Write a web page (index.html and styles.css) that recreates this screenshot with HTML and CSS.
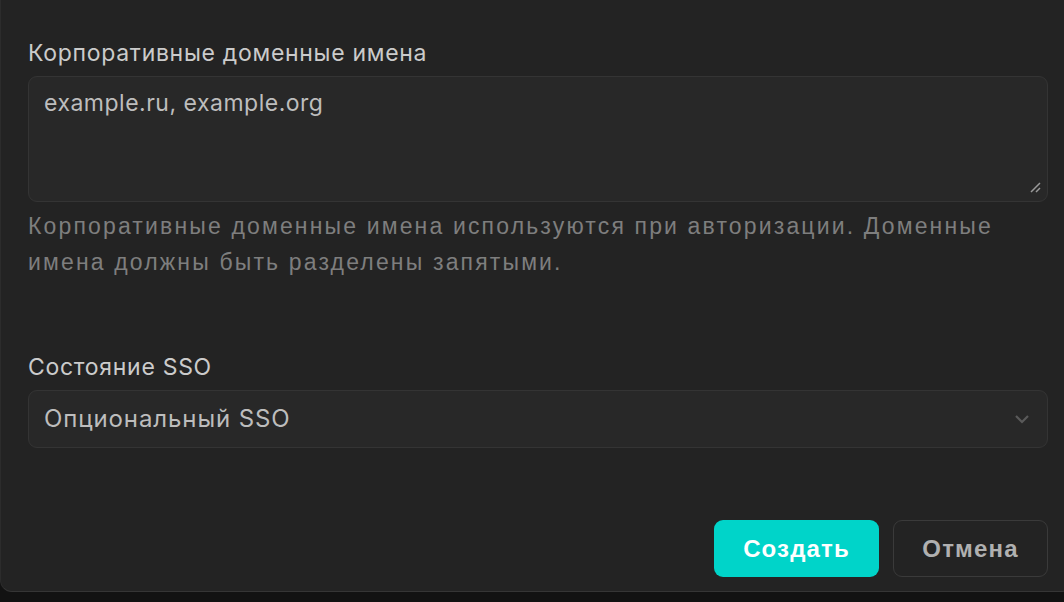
FILE: index.html
```html
<!DOCTYPE html>
<html lang="ru">
<head>
<meta charset="utf-8">
<link rel="stylesheet" href="styles.css">
</head>
<body>
<div class="modal">
  <div class="field">
    <label class="label">Корпоративные доменные имена</label>
    <div class="textarea">
      <span class="value">example.ru, example.org</span>
      <svg class="grip" width="12" height="12" viewBox="0 0 12 12"><path d="M2 11 L11 2 M7 11 L11 7" stroke="#9a9a9a" stroke-width="1.5" fill="none"/></svg>
    </div>
    <p class="help">Корпоративные доменные имена используются при авторизации. Доменные имена должны быть разделены запятыми.</p>
  </div>
  <div class="field sso">
    <label class="label">Состояние SSO</label>
    <div class="select">
      <span class="value select-value">Опциональный SSO</span>
      <svg class="chev" width="16" height="10" viewBox="0 0 16 10"><path d="M2 2 L8 8 L14 2" stroke="#5a5a5a" stroke-width="2.2" fill="none"/></svg>
    </div>
  </div>
  <div class="actions">
    <button class="btn primary">Создать</button>
    <button class="btn secondary">Отмена</button>
  </div>
</div>
</body>
</html>
```
FILE: styles.css
```css
html, body { margin: 0; padding: 0; }
body {
  background: #121212;
  width: 1064px;
  height: 602px;
  overflow: hidden;
  font-family: Inter, "Liberation Sans", sans-serif;
}
.modal {
  box-sizing: border-box;
  width: 1074px;
  height: 592px;
  background: #232323;
  border-bottom: 1px solid #353535;
  border-left: 1px solid #2c2c2c;
  border-radius: 0 0 12px 12px;
  padding: 38px 17px 0 27px;
  display: flex;
  flex-direction: column;
}
.field { display: flex; flex-direction: column; }
.label {
  font-size: 23px;
  letter-spacing: 0.7px;
  color: #cbcbcb;
  line-height: 30px;
  margin-bottom: 8px;
}
.textarea {
  box-sizing: border-box;
  position: relative;
  width: 1020px;
  height: 126px;
  background: #282828;
  border: 1px solid #343434;
  border-radius: 9px;
  padding: 11px 15px;
}
.value {
  font-size: 23px;
  letter-spacing: 0.5px;
  color: #bdbdbd;
  line-height: 30px;
}
.select-value {
  font-size: 24px;
  letter-spacing: 0.9px;
}
.grip { position: absolute; right: 6px; bottom: 8px; }
.help {
  margin: 6px 0 0;
  font-family: "Liberation Sans", Arial, sans-serif;
  font-size: 23px;
  letter-spacing: 2.15px;
  line-height: 36px;
  color: #7e7e7e;
  width: 1015px;
}
.sso { margin-top: 72px; }
.select {
  box-sizing: border-box;
  width: 1020px;
  height: 58px;
  background: #282828;
  border: 1px solid #343434;
  border-radius: 9px;
  padding: 0 17px 0 15px;
  display: flex;
  align-items: center;
  justify-content: space-between;
}
.actions {
  display: flex;
  justify-content: flex-end;
  gap: 14px;
  margin-top: 72px;
  width: 1020px;
}
.btn {
  height: 57px;
  border-radius: 9px;
  font-family: "Liberation Sans", Arial, sans-serif;
  font-weight: bold;
  font-size: 24px;
  letter-spacing: 1.15px;
  cursor: pointer;
}
.primary {
  width: 165px;
  background: #00d4c9;
  border: none;
  color: #ffffff;
}
.secondary {
  width: 155px;
  background: #232323;
  border: 1px solid #3a3a3a;
  color: #b0b0b0;
}
```
